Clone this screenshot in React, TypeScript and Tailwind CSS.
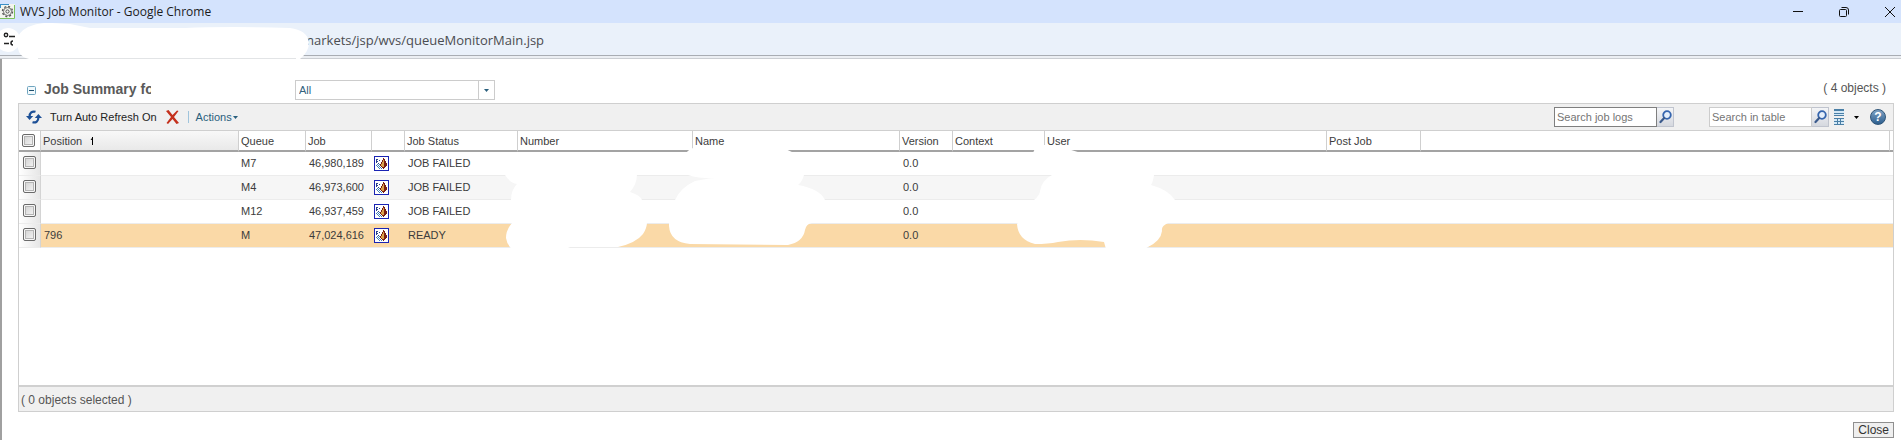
import { useState } from "react";

type Job = {
  position: string;
  queue: string;
  job: string;
  status: string;
  version: string;
};

const JOBS: Job[] = [
  { position: "", queue: "M7", job: "46,980,189", status: "JOB FAILED", version: "0.0" },
  { position: "", queue: "M4", job: "46,973,600", status: "JOB FAILED", version: "0.0" },
  { position: "", queue: "M12", job: "46,937,459", status: "JOB FAILED", version: "0.0" },
  { position: "796", queue: "M", job: "47,024,616", status: "READY", version: "0.0" },
];

const COLUMNS = [
  { label: "Queue", width: "w-[67px]" },
  { label: "Job", width: "w-[66px]" },
  { label: "", width: "w-[33px]" },
  { label: "Job Status", width: "w-[113px]" },
  { label: "Number", width: "w-[175px]" },
  { label: "Name", width: "w-[207px]" },
  { label: "Version", width: "w-[53px]" },
  { label: "Context", width: "w-[92px]" },
  { label: "User", width: "w-[282px]" },
  { label: "Post Job", width: "w-[94px]" },
  { label: "", width: "" },
];

const CHECKBOX =
  "block h-[13px] w-[13px] appearance-none rounded-[2px] border border-[#6a6a6a] bg-linear-to-br from-[#cfcfcf] to-[#f8f8f8] shadow-[inset_0_0_0_1px_#f7f7f7,inset_0_0_0_2px_#b4b4b4] checked:to-[#4a7ebb]";

const TH = "border-r border-b-2 border-r-[#cfcfcf] border-b-[#a3a3a3] p-0 font-normal";
const TD = "border-b border-[#ececec] p-0 pb-[2px]";

function rowBg(i: number) {
  if (JOBS[i].status === "READY") return "bg-[#fad9a7]";
  return i % 2 ? "bg-[#f6f6f6]" : "bg-white";
}

function FaviconGear() {
  return (
    <svg width="15" height="15" viewBox="0 0 15 15" fill="none" aria-hidden="true">
      <rect x="0" y="0" width="15" height="15" fill="#f3f5ef" />
      <path d="M0 .5h9" stroke="#3a8fc8" />
      <path d="M.5 0v4" stroke="#3a8fc8" />
      <path d="M14.5 1v13.5H0" stroke="#7cc35c" />
      <circle cx="7.5" cy="7.5" r="5" stroke="#555" strokeWidth="1.4" strokeDasharray="2 1.93" />
      <circle cx="7.5" cy="7.5" r="4" stroke="#666" strokeWidth=".9" />
      <circle cx="7.5" cy="7.5" r="1.6" stroke="#444" strokeWidth=".9" />
    </svg>
  );
}

function SearchIcon() {
  return (
    <svg width="13" height="14" viewBox="0 0 13 14" fill="none" aria-hidden="true">
      <circle cx="8" cy="5" r="3.8" fill="#e4eefa" stroke="#3565ae" strokeWidth="1.8" />
      <path d="M5.2 8L1.5 12" stroke="#3a5a8c" strokeWidth="2.2" strokeLinecap="round" />
    </svg>
  );
}

function JobIcon() {
  return (
    <svg width="15" height="15" viewBox="0 0 15 15" shapeRendering="crispEdges" aria-hidden="true">
      <rect x=".5" y=".5" width="14" height="14" fill="#fff" stroke="#1a24b4" />
      <path d="M2 3h1v4H2zM3 3h1v1H3zM3 5h1v1H3zM5 4h1v1H5zM4 7h1v1H4z" fill="#27408b" />
      <path d="M3 8h1v1H3zM5 8h1v1H5zM2 9h1v1H2zM4 9h1v1H4zM3 10h1v1H3zM5 10h1v1H5zM4 11h1v1H4zM6 11h1v1H6zM5 12h1v1H5zM7 12h1v1H7z" fill="#3f7fb8" />
      <path d="M9 2h1v1h1v2h1v2h1v3h-1v1h-1v1h-1v1H9v-1H8v-1H7v-1H6V8h1V6h1V4h1z" fill="#7a1e12" />
      <path d="M8 6h1V4h1v7H8v-1H7V8h1z" fill="#dba24c" />
    </svg>
  );
}

function TableViewIcon() {
  return (
    <svg width="10" height="16" viewBox="0 0 10 16" aria-hidden="true">
      <rect width="10" height="7" fill="#d3e8f6" />
      <path d="M0 0h10v2H0zM0 4h10v1H0zM0 6h10v1H0z" fill="#4a7fa6" />
      <rect y="9" width="10" height="7" fill="#d3e8f6" />
      <path d="M0 9h10v1H0zM0 12h10v1H0zM0 15h10v1H0zM3 9h1v7H3zM6 9h1v7H6z" fill="#4a7fa6" />
    </svg>
  );
}

function SearchBox({ label, border }: { label: string; border: string }) {
  return (
    <form className="flex" onSubmit={(e) => e.preventDefault()}>
      <input type="text" aria-label={label} placeholder={label}
        className={`h-5 w-[103px] border bg-white px-[2px] text-[11px] text-[#333] outline-none placeholder:text-[#757575] ${border}`} />
      <button type="submit" aria-label={label}
        className="flex h-5 w-[17px] items-center justify-center border-t border-r border-b border-[#c0c4ce] bg-linear-to-b from-[#f4f5f7] to-[#d5d8df]">
        <SearchIcon />
      </button>
    </form>
  );
}

function TitleBar() {
  return (
    <div className="flex h-[23px] items-center justify-between bg-[#d4e3fd]">
      <div className="flex items-center gap-[5px]">
        <FaviconGear />
        <span className="font-['Open_Sans','Noto_Sans',sans-serif] text-[12px] leading-4 text-[#1b1b1b]">WVS Job Monitor - Google Chrome</span>
      </div>
      <div className="flex items-center gap-9 pr-[6px]">
        <button aria-label="Minimize">
          <svg width="10" height="10" viewBox="0 0 10 10" stroke="#111"><path d="M0 4.5h10" /></svg>
        </button>
        <button aria-label="Restore">
          <svg width="10" height="10" viewBox="0 0 10 10" fill="none" stroke="#111">
            <rect x=".5" y="2.5" width="7" height="7" rx="1" />
            <path d="M2.5 .5H7a2.5 2.5 0 0 1 2.5 2.5v4.5" />
          </svg>
        </button>
        <button aria-label="Close window">
          <svg width="10" height="10" viewBox="0 0 10 10" stroke="#111"><path d="M0 0l10 10M10 0L0 10" /></svg>
        </button>
      </div>
    </div>
  );
}

function AddressBar() {
  return (
    <div className="relative flex h-9 flex-col">
      <div className="flex h-8 items-center bg-[#eaf1fa] pt-[2px] pl-[302px]">
        <span className="font-['Open_Sans','Noto_Sans',sans-serif] text-[13px] leading-5 text-[#4a4d51]">markets/jsp/wvs/queueMonitorMain.jsp</span>
      </div>
      <div className="h-1 border-t border-b border-t-[#a9adb3] border-b-[#cbced2] bg-[#eceff3]" />
      <svg className="absolute top-0 left-0" width="312" height="36" viewBox="0 23 312 36" fill="none" aria-hidden="true">
        <circle cx="8" cy="40" r="12" fill="#fff" />
        <path d="M16 42Q18 32 28 27Q40 22 52 23L70 24Q80 26 90 28L185 28Q230 26 290 28Q307 30 309 42Q309 52 300 59H38Q24 61 19 52Z" fill="#fff" />
        <path d="M38 58.500H296" stroke="#e2e4e6" />
        <circle cx="6" cy="35" r="1.700" stroke="#222" strokeWidth="1.400" />
        <path d="M9 36.500h6M4 43.500h5" stroke="#222" strokeWidth="1.500" />
        <path d="M13 41a2 2 0 0 0 0 4" stroke="#222" strokeWidth="1.500" />
      </svg>
    </div>
  );
}

function Toolbar() {
  return (
    <div className="flex h-[27px] items-center justify-between border-b border-[#cfcfcf] bg-[#f0f0f0] px-[7px]">
      <div className="flex items-center text-[11px] leading-4">
        <button className="flex items-center gap-2 text-[#222]">
          <svg width="16" height="14" viewBox="0 0 16 14" fill="none" aria-hidden="true">
            <path d="M9.5 1.800C6 .8 3.600 3 3.600 6.500" stroke="#1c4f96" strokeWidth="2.200" />
            <path d="M0 6h7.200L3.600 10z" fill="#1c4f96" />
            <path d="M6.500 12.200c3.500 1 5.900-1.200 5.900-4.700" stroke="#1c4f96" strokeWidth="2.200" />
            <path d="M16 8H8.800L12.400 4z" fill="#1c4f96" />
          </svg>
          Turn Auto Refresh On
        </button>
        <button aria-label="Delete" className="ml-[9px]">
          <svg width="13" height="14" viewBox="0 0 13 14" aria-hidden="true">
            <path d="M0 1L2.500 0 6.500 5 11 .5 12.500 1 8 7l5 6-2.500 1-4-5L2 14 .5 13 5 7z" fill="#c4301c" />
          </svg>
        </button>
        <span className="ml-[9px] mr-[7px] h-3 border-l border-[#9fc4dc]" />
        <button className="flex items-center gap-px text-[#2a5f7d]">
          Actions
          <svg width="5" height="3" viewBox="0 0 5 3" aria-hidden="true"><path d="M0 0h5L2.500 3z" fill="#2a5f7d" /></svg>
        </button>
      </div>
      <div className="flex items-center">
        <SearchBox label="Search job logs" border="border-[#7f7f7f]" />
        <div className="ml-[35px]">
          <SearchBox label="Search in table" border="border-[#cccccc]" />
        </div>
        <button aria-label="Table views" className="ml-[5px] flex items-center gap-[10px]">
          <TableViewIcon />
          <svg width="5" height="3" viewBox="0 0 5 3" aria-hidden="true"><path d="M0 0h5L2.500 3z" fill="#000" /></svg>
        </button>
        <button aria-label="Help" className="ml-[11px] flex h-4 w-4 items-center justify-center rounded-full border border-[#2f5578] bg-linear-to-b from-[#7fa3c4] to-[#2d5f8f] text-[12px] leading-4 font-bold text-white">?</button>
      </div>
    </div>
  );
}

// white marker strokes that hide the number, name and user values
function Redactions() {
  return (
    <svg className="pointer-events-none absolute top-[12px] left-[481px]" width="700" height="105" viewBox="500 143 700 105" fill="#fff" aria-hidden="true">
      <path d="M505 175Q510 183 517 184Q511 190 511 200L512 223Q506 230 506 238Q507 245 512 249L566 249L570 247H618Q636 243 643 234Q647 228 647 222L642 200Q640 195 630 192Q637 184 637 174Z" />
      <path d="M686 153Q690 148 697 147H778Q786 149 794 153L800 163L804 175Q802 182 798 185Q820 189 825 200V222L812 223Q806 224 805 230Q803 242 788 245L690 244Q670 242 669 226V222L675 200Q680 188 695 181Q708 178 720 178Q700 179 688 175Z" />
      <path d="M1033 153Q1034 147 1044 145Q1058 145 1068 149L1081 153L1152 165L1154 175Q1153 182 1151 185Q1169 190 1175 200V222L1168 223Q1161 226 1162 231Q1161 242 1144 249H1106L1104 242Q1080 238 1058 242Q1048 244 1035 244Q1018 240 1017 224L1034 200Q1040 195 1040 191Q1042 180 1052 175Z" />
    </svg>
  );
}

function JobTable() {
  const [selected, setSelected] = useState<string[]>([]);
  const allSelected = selected.length === JOBS.length;

  const toggle = (job: string) =>
    setSelected((s) => (s.includes(job) ? s.filter((j) => j !== job) : [...s, job]));

  return (
    <>
      <div className="relative h-[254px]">
        <table className="w-full table-fixed border-separate border-spacing-0 text-left text-[11px] leading-4 text-[#3c3c3c]">
          <thead>
            <tr className="h-[21px]">
              <th className={`${TH} w-[22px] pl-[3px]`}>
                <input type="checkbox" aria-label="Select all" className={CHECKBOX} checked={allSelected}
                  onChange={() => setSelected(allSelected ? [] : JOBS.map((j) => j.job))} />
              </th>
              <th className={`${TH} w-[198px] bg-linear-to-b from-[#f8f8f8] to-[#e9e9e9] pl-[2px]`}>
                <span className="flex items-center gap-[8px]">
                  Position
                  <svg width="5" height="8" viewBox="0 0 5 8" fill="none" stroke="#000" aria-hidden="true"><path d="M2.500 0v8M1 3l1.500-2" /></svg>
                </span>
              </th>
              {COLUMNS.map((c, i) => (
                <th key={i} className={`${TH} ${c.width} pl-[2px]`}>{c.label}</th>
              ))}
              <th className="w-[3px] border-b-2 border-b-[#a3a3a3] p-0" />
            </tr>
          </thead>
          <tbody>
            {JOBS.map((j, i) => (
              <tr key={j.job} className={`h-6 ${rowBg(i)}`}>
                <td className="border-r border-b border-r-[#d4d4d4] border-b-[#ececec] bg-linear-to-r from-white to-[#e6e6e6] p-0 pb-[2px] pl-1">
                  <input type="checkbox" aria-label={`Select job ${j.job}`} className={CHECKBOX}
                    checked={selected.includes(j.job)} onChange={() => toggle(j.job)} />
                </td>
                <td className={`${TD} pl-[3px]`}>{j.position}</td>
                <td className={`${TD} pl-[2px]`}>{j.queue}</td>
                <td className={`${TD} pr-[8px] text-right`}>{j.job}</td>
                <td className="border-b border-[#ececec] p-0 pl-[2px]"><JobIcon /></td>
                <td className={`${TD} pl-[3px]`}>{j.status}</td>
                <td className={TD} />
                <td className={TD} />
                <td className={`${TD} pl-[3px]`}>{j.version}</td>
                <td className={TD} colSpan={5} />
              </tr>
            ))}
          </tbody>
        </table>
        <Redactions />
      </div>
      <div className="flex h-[27px] items-center border-t-2 border-b border-t-[#d0d0d0] border-b-[#cfcfcf] bg-[#f0f0f0] pt-[2px] pl-[2px] text-[12px] leading-4 text-[#555]">
        ( {selected.length} objects selected )
      </div>
    </>
  );
}

export default function App() {
  const [open, setOpen] = useState(true);

  return (
    <div className="min-h-screen bg-white font-['Liberation_Sans',Arial,sans-serif]">
      <TitleBar />
      <AddressBar />
      <main className="min-h-[381px] border-l-2 border-[#a0a0a0] pt-[21px] pr-[7px] pl-4">
        <div className="flex h-[23px] items-start justify-between pr-[8px] pl-[9px]">
          <div className="flex items-start">
            <div className="flex w-[268px] items-center gap-2 pt-px">
              <button aria-label="Collapse job summary" onClick={() => setOpen(!open)} className="pt-[2px]">
                <svg width="9" height="9" viewBox="0 0 9 9" fill="none" aria-hidden="true">
                  <rect x=".5" y=".5" width="8" height="8" rx="1" fill="#f2f9fc" stroke="#6fa5bf" />
                  <path d="M2 4.500h5" stroke="#1d4f6c" />
                </svg>
              </button>
              <h1 className="w-[107px] overflow-hidden text-[14px] leading-4 font-bold whitespace-nowrap text-[#5a5a5a]">Job Summary fo</h1>
            </div>
            <div className="flex h-5 w-[200px] items-center border border-[#cccccc] bg-white">
              <select aria-label="Job filter" className="h-full flex-1 appearance-none border-r border-[#cccccc] bg-white pl-[3px] text-[11px] leading-4 text-[#33627d] outline-none">
                <option>All</option>
              </select>
              <svg className="mx-[5px]" width="5" height="3" viewBox="0 0 5 3" aria-hidden="true"><path d="M0 0h5L2.500 3z" fill="#2a5f7d" /></svg>
            </div>
          </div>
          <span className="text-[12px] leading-4 text-[#555]">( {JOBS.length} objects )</span>
        </div>
        <section className="border-x border-t border-[#cfcfcf]">
          <Toolbar />
          {open && <JobTable />}
        </section>
        <div className="mt-[10px] flex justify-end">
          <button className="h-4 border border-[#8f8f8f] bg-[#efefef] px-1 text-[12px] leading-[14px] text-[#333]">Close</button>
        </div>
      </main>
    </div>
  );
}
